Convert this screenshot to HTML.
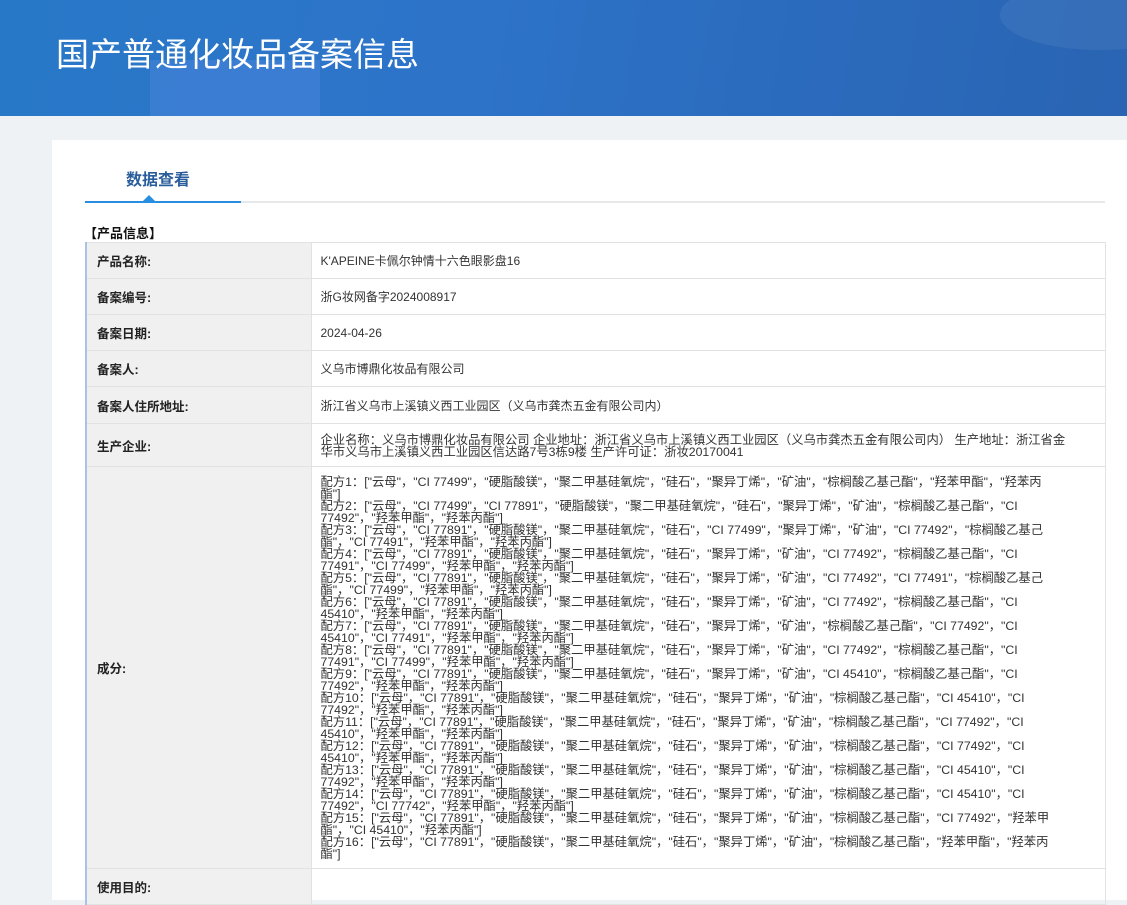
<!DOCTYPE html>
<html><head><meta charset="utf-8"><style>
*{margin:0;padding:0;box-sizing:border-box}
body{width:1127px;height:881px;overflow:hidden;background:#eef2f5;font-family:"Liberation Sans","Noto Sans CJK SC",sans-serif;color:#333}
.hd{position:absolute;left:0;top:0;width:1127px;height:116px;background:linear-gradient(100deg,#2878c8 0%,#2d74c9 40%,#2b6bbd 70%,#2a64b3 100%);overflow:hidden}
.hd .b1{position:absolute;left:150px;top:60px;width:170px;height:60px;background:rgba(90,140,230,.35)}
.hd .b2{position:absolute;left:1000px;top:-20px;width:200px;height:70px;border-radius:50%;background:rgba(255,255,255,.06)}
.hd h1{position:absolute;left:56px;top:28px;font-size:33px;font-weight:normal;color:#fff}
.card{position:absolute;left:52px;top:140px;width:1075px;height:760px;background:#fff}
.tab{position:absolute;left:126px;top:166px;font-size:16px;font-weight:bold;color:#2a5d9c}
.line{position:absolute;left:85px;top:201px;width:1020px;height:2px;background:#e6e8ea}
.line2{position:absolute;left:85px;top:201px;width:156px;height:2px;background:#2a8ee0}
.tri{position:absolute;left:143px;top:195px;width:0;height:0;border-left:6px solid transparent;border-right:6px solid transparent;border-bottom:6px solid #2a8ee0}
.sec{position:absolute;left:84px;top:226px;font-size:13px;font-weight:bold;color:#111;line-height:16px}
table{position:absolute;left:85px;top:242px;width:1021px;border-collapse:collapse;border:1px solid #a9c3e6;border-left:2px solid #a9c3e6;font-size:12px}
td{border:1px solid #e2e2e2;vertical-align:middle}
td.l{width:225px;background:#f0f0f0;font-weight:bold;padding-left:10px;font-size:12.5px;color:#222}
td.v{padding-left:9px;color:#333}
.f{line-height:12px;font-size:12.3px;white-space:nowrap;padding:6px 0 6px 9px;color:#333}
</style></head><body>
<div class="hd"><div class="b1"></div><div class="b2"></div><h1>国产普通化妆品备案信息</h1></div>
<div class="card"></div>
<div class="tab">数据查看</div>
<div class="line"></div><div class="line2"></div><div class="tri"></div>
<div class="sec">【产品信息】</div>
<table>
<tr style="height:36px"><td class="l">产品名称:</td><td class="v">K'APEINE卡佩尔钟情十六色眼影盘16</td></tr>
<tr style="height:36px"><td class="l">备案编号:</td><td class="v">浙G妆网备字2024008917</td></tr>
<tr style="height:36px"><td class="l">备案日期:</td><td class="v">2024-04-26</td></tr>
<tr style="height:36px"><td class="l">备案人:</td><td class="v">义乌市博鼎化妆品有限公司</td></tr>
<tr style="height:37px"><td class="l">备案人住所地址:</td><td class="v">浙江省义乌市上溪镇义西工业园区（义乌市龚杰五金有限公司内）</td></tr>
<tr style="height:43px"><td class="l">生产企业:</td><td class="f" style="padding-top:8px">企业名称：义乌市博鼎化妆品有限公司 企业地址：浙江省义乌市上溪镇义西工业园区（义乌市龚杰五金有限公司内） 生产地址：浙江省金<br>华市义乌市上溪镇义西工业园区信达路7号3栋9楼 生产许可证：浙妆20170041</td></tr>
<tr style="height:402px"><td class="l">成分:</td><td class="f">配方1：["云母"，"CI 77499"，"硬脂酸镁"，"聚二甲基硅氧烷"，"硅石"，"聚异丁烯"，"矿油"，"棕榈酸乙基己酯"，"羟苯甲酯"，"羟苯丙<br>酯"]<br>配方2：["云母"，"CI 77499"，"CI 77891"，"硬脂酸镁"，"聚二甲基硅氧烷"，"硅石"，"聚异丁烯"，"矿油"，"棕榈酸乙基己酯"，"CI<br>77492"，"羟苯甲酯"，"羟苯丙酯"]<br>配方3：["云母"，"CI 77891"，"硬脂酸镁"，"聚二甲基硅氧烷"，"硅石"，"CI 77499"，"聚异丁烯"，"矿油"，"CI 77492"，"棕榈酸乙基己<br>酯"，"CI 77491"，"羟苯甲酯"，"羟苯丙酯"]<br>配方4：["云母"，"CI 77891"，"硬脂酸镁"，"聚二甲基硅氧烷"，"硅石"，"聚异丁烯"，"矿油"，"CI 77492"，"棕榈酸乙基己酯"，"CI<br>77491"，"CI 77499"，"羟苯甲酯"，"羟苯丙酯"]<br>配方5：["云母"，"CI 77891"，"硬脂酸镁"，"聚二甲基硅氧烷"，"硅石"，"聚异丁烯"，"矿油"，"CI 77492"，"CI 77491"，"棕榈酸乙基己<br>酯"，"CI 77499"，"羟苯甲酯"，"羟苯丙酯"]<br>配方6：["云母"，"CI 77891"，"硬脂酸镁"，"聚二甲基硅氧烷"，"硅石"，"聚异丁烯"，"矿油"，"CI 77492"，"棕榈酸乙基己酯"，"CI<br>45410"，"羟苯甲酯"，"羟苯丙酯"]<br>配方7：["云母"，"CI 77891"，"硬脂酸镁"，"聚二甲基硅氧烷"，"硅石"，"聚异丁烯"，"矿油"，"棕榈酸乙基己酯"，"CI 77492"，"CI<br>45410"，"CI 77491"，"羟苯甲酯"，"羟苯丙酯"]<br>配方8：["云母"，"CI 77891"，"硬脂酸镁"，"聚二甲基硅氧烷"，"硅石"，"聚异丁烯"，"矿油"，"CI 77492"，"棕榈酸乙基己酯"，"CI<br>77491"，"CI 77499"，"羟苯甲酯"，"羟苯丙酯"]<br>配方9：["云母"，"CI 77891"，"硬脂酸镁"，"聚二甲基硅氧烷"，"硅石"，"聚异丁烯"，"矿油"，"CI 45410"，"棕榈酸乙基己酯"，"CI<br>77492"，"羟苯甲酯"，"羟苯丙酯"]<br>配方10：["云母"，"CI 77891"，"硬脂酸镁"，"聚二甲基硅氧烷"，"硅石"，"聚异丁烯"，"矿油"，"棕榈酸乙基己酯"，"CI 45410"，"CI<br>77492"，"羟苯甲酯"，"羟苯丙酯"]<br>配方11：["云母"，"CI 77891"，"硬脂酸镁"，"聚二甲基硅氧烷"，"硅石"，"聚异丁烯"，"矿油"，"棕榈酸乙基己酯"，"CI 77492"，"CI<br>45410"，"羟苯甲酯"，"羟苯丙酯"]<br>配方12：["云母"，"CI 77891"，"硬脂酸镁"，"聚二甲基硅氧烷"，"硅石"，"聚异丁烯"，"矿油"，"棕榈酸乙基己酯"，"CI 77492"，"CI<br>45410"，"羟苯甲酯"，"羟苯丙酯"]<br>配方13：["云母"，"CI 77891"，"硬脂酸镁"，"聚二甲基硅氧烷"，"硅石"，"聚异丁烯"，"矿油"，"棕榈酸乙基己酯"，"CI 45410"，"CI<br>77492"，"羟苯甲酯"，"羟苯丙酯"]<br>配方14：["云母"，"CI 77891"，"硬脂酸镁"，"聚二甲基硅氧烷"，"硅石"，"聚异丁烯"，"矿油"，"棕榈酸乙基己酯"，"CI 45410"，"CI<br>77492"，"CI 77742"，"羟苯甲酯"，"羟苯丙酯"]<br>配方15：["云母"，"CI 77891"，"硬脂酸镁"，"聚二甲基硅氧烷"，"硅石"，"聚异丁烯"，"矿油"，"棕榈酸乙基己酯"，"CI 77492"，"羟苯甲<br>酯"，"CI 45410"，"羟苯丙酯"]<br>配方16：["云母"，"CI 77891"，"硬脂酸镁"，"聚二甲基硅氧烷"，"硅石"，"聚异丁烯"，"矿油"，"棕榈酸乙基己酯"，"羟苯甲酯"，"羟苯丙<br>酯"]</td></tr>
<tr style="height:36px"><td class="l">使用目的:</td><td class="v"></td></tr>
</table>
</body></html>
